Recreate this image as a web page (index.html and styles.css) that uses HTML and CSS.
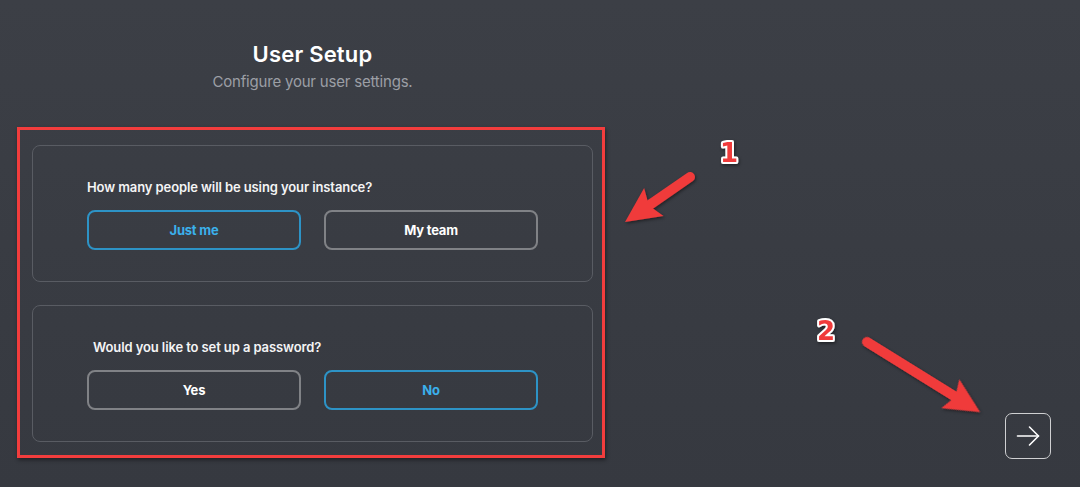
FILE: index.html
```html
<!DOCTYPE html>
<html lang="en">
<head>
<meta charset="utf-8">
<title>User Setup</title>
<link rel="stylesheet" href="styles.css">
</head>
<body>
<div class="page">
  <main class="main">
    <header class="head">
      <h1 class="title">User Setup</h1>
      <p class="subtitle">Configure your user settings.</p>
    </header>
    <div class="frame">
      <section class="card">
        <p class="question">How many people will be using your instance?</p>
        <div class="options">
          <button class="option selected">Just me</button>
          <button class="option">My team</button>
        </div>
      </section>
      <section class="card">
        <p class="question question-2">Would you like to set up a password?</p>
        <div class="options">
          <button class="option">Yes</button>
          <button class="option selected">No</button>
        </div>
      </section>
    </div>
  </main>
  <aside class="side">
    <button class="next" aria-label="Next">
      <svg width="24" height="24" viewBox="0 0 24 24" fill="none" stroke="#ffffff" stroke-width="1.6" stroke-linecap="round" stroke-linejoin="round">
        <path d="M1.5 12h21"/>
        <path d="M13.5 3l9 9-9 9"/>
      </svg>
    </button>
  </aside>
</div>
<svg class="annotations" width="1080" height="487" viewBox="0 0 1080 487">
  <defs>
    <filter id="sh" x="-20%" y="-20%" width="140%" height="140%">
      <feDropShadow dx="1" dy="1.5" stdDeviation="1.5" flood-color="#000" flood-opacity="0.45"/>
    </filter>
  </defs>
  <g filter="url(#sh)" fill="#f03b3b">
    <g transform="translate(690 177) rotate(145.3)">
      <line x1="0" y1="0" x2="56" y2="0" stroke="#f03b3b" stroke-width="10" stroke-linecap="round"/>
      <polygon points="79,0 44,-17 50,0 44,17"/>
    </g>
    <g transform="translate(867 342) rotate(31.8)">
      <line x1="0" y1="0" x2="110" y2="0" stroke="#f03b3b" stroke-width="10" stroke-linecap="round"/>
      <polygon points="133,0 98,-17 104,0 98,17"/>
    </g>
  </g>
  <g class="nums" filter="url(#sh)">
    <text x="729" y="162" text-anchor="middle">1</text>
    <text x="826" y="340" text-anchor="middle">2</text>
  </g>
</svg>
</body>
</html>
```

FILE: styles.css
```css
* { box-sizing: border-box; }

html, body {
  margin: 0;
  padding: 0;
}

body {
  width: 1080px;
  height: 487px;
  overflow: hidden;
  position: relative;
  background: linear-gradient(180deg, #3c3f46 0%, #363940 100%);
  font-family: Inter, "Noto Sans", "Liberation Sans", sans-serif;
  color: #ffffff;
}

.page {
  display: flex;
  height: 100%;
}

.main {
  width: 624px;
  padding-left: 17px;
  display: flex;
  flex-direction: column;
}

.head {
  width: 588px;
  padding-top: 40px;
  text-align: center;
  padding-left: 3px;
}

.title {
  margin: 0;
  font-size: 22px;
  line-height: 28px;
  font-weight: 600;
  letter-spacing: 0.2px;
  color: #ffffff;
}

.subtitle {
  margin: 4px 0 0;
  font-size: 15px;
  line-height: 20px;
  font-weight: 400;
  color: #9c9fa5;
  letter-spacing: -0.2px;
}

.frame {
  margin-top: 35px;
  width: 588px;
  border: 3px solid #f23d3d;
  padding: 15px 10px 13px 12px;
  display: flex;
  flex-direction: column;
  gap: 23px;
  box-shadow: 1px 2px 4px rgba(0, 0, 0, 0.45);
}

.card {
  width: 561px;
  border: 1px solid #595c63;
  border-radius: 8px;
  padding: 31px 0 31px 54px;
}

.question {
  margin: 0;
  font-size: 13px;
  line-height: 20px;
  font-weight: 600;
  letter-spacing: -0.1px;
  color: #f4f4f5;
}

.question-2 {
  padding-left: 6px;
}

.options {
  margin-top: 13px;
  display: flex;
  gap: 23px;
}

.option {
  width: 214px;
  height: 40px;
  border: 2px solid #808286;
  border-radius: 8px;
  background: transparent;
  color: #ffffff;
  font-family: inherit;
  font-size: 13px;
  font-weight: 700;
  letter-spacing: -0.2px;
  padding: 0;
}

.option.selected {
  border-color: #2d93c6;
  color: #3bb0eb;
}

.side {
  flex: 1;
  display: flex;
  align-items: flex-end;
  justify-content: flex-end;
  padding: 0 29px 28px 0;
}

.next {
  width: 46px;
  height: 46px;
  border: 1.5px solid #cfd0d2;
  border-radius: 7px;
  background: transparent;
  display: flex;
  align-items: center;
  justify-content: center;
  padding: 0;
}

.annotations {
  position: absolute;
  left: 0;
  top: 0;
  pointer-events: none;
}

.nums text {
  font-family: "DejaVu Sans", Inter, sans-serif;
  font-weight: 700;
  font-size: 26px;
  fill: #f03b3b;
  stroke: #ffffff;
  stroke-width: 4px;
  paint-order: stroke fill;
  stroke-linejoin: round;
}
```
